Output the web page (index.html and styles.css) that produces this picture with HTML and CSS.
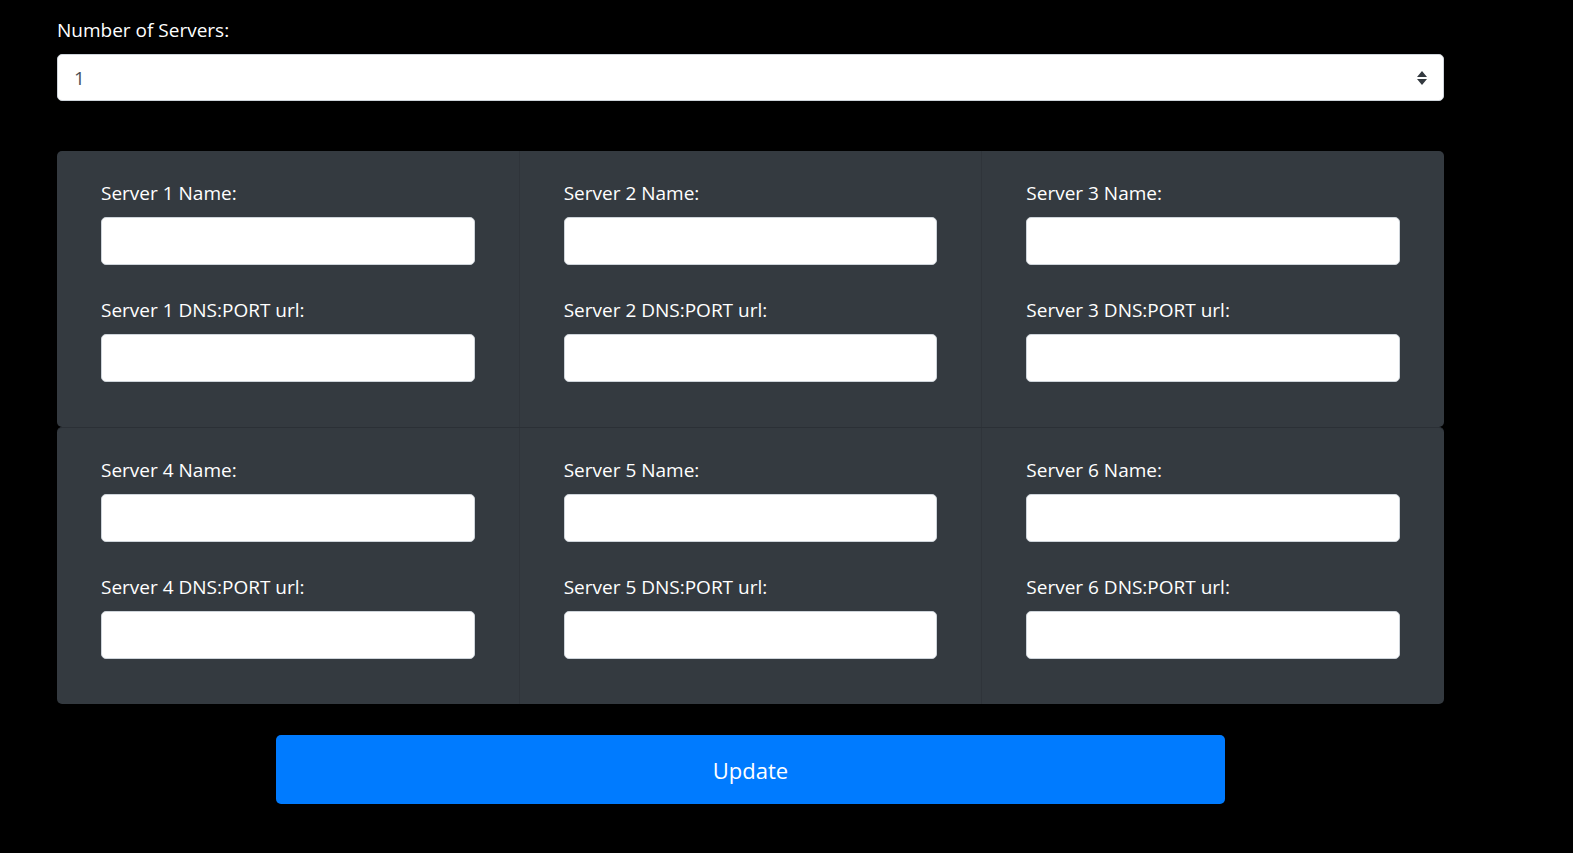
FILE: index.html
```html
<!DOCTYPE html>
<html>
<head>
    <meta charset="utf-8" />
    <title>Servers</title>
    <meta name="viewport" content="width=device-width, initial-scale=1">
    <link rel="stylesheet" href="styles.css">
</head>
<body>
    <div class="container">
        <form>
            <div class="count-group">
                <label for="count">Number of Servers:</label>
                <select id="count" class="count-select">
                    <option>1</option>
                    <option>2</option>
                    <option>3</option>
                    <option>4</option>
                    <option>5</option>
                    <option>6</option>
                </select>
            </div>

            <div class="panel">
                <div class="panel-row">
                    <div class="col">
                        <label>Server 1 Name:</label>
                        <input type="text" id="n1"/>
                        <label class="second">Server 1 DNS:PORT url:</label>
                        <input type="text" id="u1"/>
                    </div>
                    <div class="col">
                        <label>Server 2 Name:</label>
                        <input type="text" id="n2"/>
                        <label class="second">Server 2 DNS:PORT url:</label>
                        <input type="text" id="u2"/>
                    </div>
                    <div class="col">
                        <label>Server 3 Name:</label>
                        <input type="text" id="n3"/>
                        <label class="second">Server 3 DNS:PORT url:</label>
                        <input type="text" id="u3"/>
                    </div>
                </div>
                <div class="panel-row">
                    <div class="col">
                        <label>Server 4 Name:</label>
                        <input type="text" id="n4"/>
                        <label class="second">Server 4 DNS:PORT url:</label>
                        <input type="text" id="u4"/>
                    </div>
                    <div class="col">
                        <label>Server 5 Name:</label>
                        <input type="text" id="n5"/>
                        <label class="second">Server 5 DNS:PORT url:</label>
                        <input type="text" id="u5"/>
                    </div>
                    <div class="col">
                        <label>Server 6 Name:</label>
                        <input type="text" id="n6"/>
                        <label class="second">Server 6 DNS:PORT url:</label>
                        <input type="text" id="u6"/>
                    </div>
                </div>
            </div>

            <button type="button" class="update">Update</button>
        </form>
    </div>
</body>
</html>
```

FILE: styles.css
```css
* {
    margin: 0;
    padding: 0;
    box-sizing: border-box;
}
body {
    background: #000;
    color: #fff;
    font-family: "Open Sans", "Noto Sans", sans-serif;
    font-size: 19px;
}
.container {
    width: 1387px;
    margin-left: 57px;
    padding-top: 15px;
}
label {
    display: block;
    line-height: 30px;
    margin-bottom: 9px;
}
.count-select {
    display: block;
    width: 100%;
    height: 47px;
    padding: 0 40px 0 16px;
    border: 1px solid #ced4da;
    border-radius: 5px;
    background: #fff url("data:image/svg+xml,%3csvg xmlns='http://www.w3.org/2000/svg' width='10' height='14' viewBox='0 0 10 14'%3e%3cpath fill='%23343a40' d='M5 0L0 6h10zM5 14L0 8h10z'/%3e%3c/svg%3e") no-repeat right 16px center;
    background-size: 10px 14px;
    color: #495057;
    font-family: inherit;
    font-size: 19px;
    -webkit-appearance: none;
    appearance: none;
}
.panel {
    margin-top: 50px;
}
.panel-row {
    display: flex;
    background: #343a40;
    border-radius: 5px;
}
.panel-row + .panel-row {
    border-top: 1px solid #2b3036;
}
.col {
    flex: 1;
    padding: 27px 44px 45px 44px;
}
.col + .col {
    border-left: 1px solid #2f343a;
}
.col input {
    display: block;
    width: 100%;
    height: 48px;
    border: 1px solid #ced4da;
    border-radius: 5px;
    background: #fff;
    font-size: 19px;
    padding: 0 15px;
}
.col .second {
    margin-top: 30px;
}
.update {
    display: block;
    width: 949px;
    height: 69px;
    margin: 31px auto 0 auto;
    border: none;
    border-radius: 5px;
    background: #007bff;
    color: #fff;
    font-family: inherit;
    font-size: 22px;
}
```
